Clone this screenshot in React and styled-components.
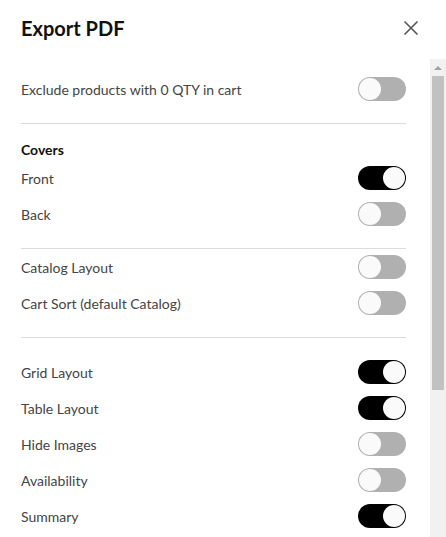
import React from "react";
import styled, { createGlobalStyle } from "styled-components";

const GlobalStyle = createGlobalStyle`
  html, body {
    margin: 0;
    padding: 0;
    background: #fff;
    overflow: hidden;
  }
  body {
    font-family: Lato, "Open Sans", sans-serif;
  }
`;

const sections = [
  { top: 17, rows: [{ label: "Exclude products with 0 QTY in cart", on: false }] },
  {
    top: 16,
    heading: "Covers",
    rows: [
      { label: "Front", on: true },
      { label: "Back", on: false },
    ],
  },
  {
    top: 6,
    rows: [
      { label: "Catalog Layout", on: false },
      { label: "Cart Sort (default Catalog)", on: false },
    ],
  },
  {
    top: 22,
    rows: [
      { label: "Grid Layout", on: true },
      { label: "Table Layout", on: true },
      { label: "Hide Images", on: false },
      { label: "Availability", on: false },
      { label: "Summary", on: true },
    ],
  },
];

const Toggle = ({ on }) => (
  <Track $on={on}>
    <Knob $on={on} />
  </Track>
);

const App = () => {
  return (
    <>
      <GlobalStyle />
      <Dialog>
        <Header>
          <Title>Export PDF</Title>
          <CloseButton aria-label="Close">
            <svg width="16" height="16" viewBox="0 0 16 16">
              <path d="M1.5 1.5 L14.5 14.5 M14.5 1.5 L1.5 14.5" stroke="#555" strokeWidth="1.6" fill="none" />
            </svg>
          </CloseButton>
        </Header>
        <Body>
          <Content>
            {sections.map((s, i) => (
              <Section key={i} $top={s.top} $last={i === sections.length - 1}>
                {s.heading && <Heading>{s.heading}</Heading>}
                <RowList>
                  {s.rows.map(r => (
                    <Row key={r.label}>
                      <Label>{r.label}</Label>
                      <Toggle on={r.on} />
                    </Row>
                  ))}
                </RowList>
              </Section>
            ))}
          </Content>
          <ScrollBar>
            <ArrowUp />
            <Thumb />
          </ScrollBar>
        </Body>
      </Dialog>
    </>
  );
};

export default App;

const Dialog = styled.div`
  width: 446px;
  height: 537px;
  display: flex;
  flex-direction: column;
  background: #fff;
`;

const Header = styled.div`
  height: 59px;
  display: flex;
  align-items: center;
  justify-content: space-between;
  padding: 0 27px 3px 21px;
  box-sizing: border-box;
  flex-shrink: 0;
`;

const Title = styled.h2`
  margin: 0;
  font-size: 20px;
  font-weight: 700;
  color: #111;
`;

const CloseButton = styled.button`
  border: 0;
  background: none;
  padding: 0;
  width: 16px;
  height: 16px;
  display: flex;
  cursor: pointer;
`;

const Body = styled.div`
  flex: 1;
  display: flex;
  min-height: 0;
`;

const Content = styled.div`
  flex: 1;
  overflow: hidden;
  padding: 1px 24px 0 21px;
`;

const ScrollBar = styled.div`
  width: 16px;
  flex-shrink: 0;
  background: #f1f1f1;
  display: flex;
  flex-direction: column;
`;

const ArrowUp = styled.div`
  height: 17px;
  display: flex;
  align-items: center;
  justify-content: center;

  &::before {
    content: "";
    width: 0;
    height: 0;
    border-left: 4px solid transparent;
    border-right: 4px solid transparent;
    border-bottom: 4px solid #a3a3a3;
  }
`;

const Thumb = styled.div`
  height: 314px;
  margin: 0 2px;
  background: #c1c1c1;
`;

const Section = styled.section`
  padding: ${p => p.$top}px 0 22px;
  border-bottom: ${p => (p.$last ? "0" : "1px solid #dcdcdc")};
`;

const Heading = styled.div`
  font-size: 14px;
  font-weight: 700;
  color: #111;
  line-height: 20px;
  margin-bottom: 6px;
`;

const RowList = styled.div`
  display: flex;
  flex-direction: column;
  gap: 12px;
`;

const Row = styled.div`
  display: flex;
  align-items: center;
  justify-content: space-between;
  height: 24px;
`;

const Label = styled.span`
  font-size: 14px;
  color: #444;
`;

const Track = styled.span`
  position: relative;
  width: 48px;
  height: 24px;
  border-radius: 12px;
  background: ${p => (p.$on ? "#000" : "#b0b0b0")};
  flex-shrink: 0;
`;

const Knob = styled.span`
  position: absolute;
  top: 1px;
  left: ${p => (p.$on ? "25px" : "1px")};
  width: 22px;
  height: 22px;
  border-radius: 50%;
  background: #fafafa;
`;
